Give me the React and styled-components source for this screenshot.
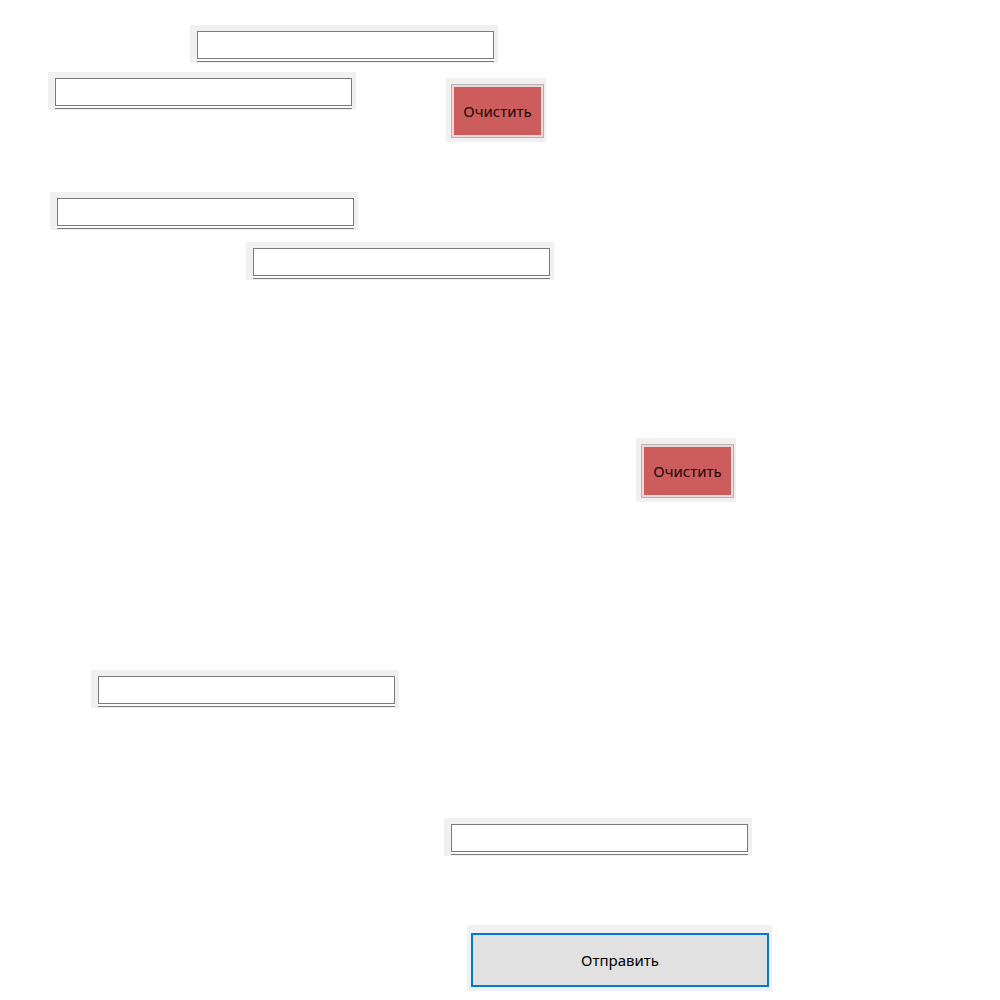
import React from 'react';
import styled, { createGlobalStyle } from 'styled-components';

const GlobalStyle = createGlobalStyle`
  html, body {
    margin: 0;
    padding: 0;
    background: #ffffff;
  }
  body {
    font-family: "Noto Sans", "Open Sans", sans-serif;
  }
`;

const Canvas = styled.div`
  position: relative;
  width: 1000px;
  height: 1000px;
  overflow: hidden;
  background: #ffffff;
`;

// every widget sits on a light grey frame, placed freely on the canvas
const Frame = styled.div`
  position: absolute;
  box-sizing: border-box;
  background: #f0f0f0;
  display: flex;
  align-items: flex-start;
`;

const FieldFrame = styled(Frame)`
  width: 308px;
  height: 38px;
  padding: 6px 0 0 7px;
`;

const TextBox = styled.input`
  box-sizing: border-box;
  width: 297px;
  height: 28px;
  margin: 0;
  padding: 0 4px;
  border: 1px solid #7a7a7a;
  border-radius: 0;
  background: #ffffff;
  outline: none;
  font: inherit;
  font-size: 14px;
  box-shadow: 0 2px 0 0 #fbfbfb, 0 3px 0 0 #7a7a7a;
`;

const ClearFrame = styled(Frame)`
  width: 100px;
  height: 64px;
  padding: 6px 0 0 5px;
`;

const ClearButton = styled.button`
  box-sizing: border-box;
  width: 93px;
  height: 54px;
  margin: 0;
  padding: 0;
  border: 1px solid #b9b0b0;
  border-radius: 0;
  background: #cd5c5c;
  box-shadow: inset 0 0 0 2px #e9d9d9;
  color: #1a0505;
  font-family: "Noto Sans", "Open Sans", sans-serif;
  font-size: 15px;
  cursor: pointer;
`;

const SubmitFrame = styled(Frame)`
  width: 305px;
  height: 66px;
  padding: 8px 0 0 4px;
`;

const SubmitButton = styled.button`
  box-sizing: border-box;
  width: 298px;
  height: 54px;
  margin: 0;
  padding: 0;
  border: 2px solid #0078d7;
  border-radius: 0;
  background: #e1e1e1;
  color: #000000;
  font-family: "Noto Sans", "Open Sans", sans-serif;
  font-size: 15px;
  cursor: pointer;
`;

const fields = [
  { x: 190, y: 25 },
  { x: 48, y: 72 },
  { x: 50, y: 192 },
  { x: 246, y: 242 },
  { x: 91, y: 670 },
  { x: 444, y: 818 },
];

const clears = [
  { x: 446, y: 78 },
  { x: 636, y: 438 },
];

export default function App() {
  return (
    <>
      <GlobalStyle />
      <Canvas>
        {fields.map((f, i) => (
          <FieldFrame key={'f' + i} style={{ left: f.x, top: f.y }}>
            <TextBox type="text" />
          </FieldFrame>
        ))}
        {clears.map((c, i) => (
          <ClearFrame key={'c' + i} style={{ left: c.x, top: c.y }}>
            <ClearButton type="button">Очистить</ClearButton>
          </ClearFrame>
        ))}
        <SubmitFrame style={{ left: 467, top: 925 }}>
          <SubmitButton type="button">Отправить</SubmitButton>
        </SubmitFrame>
      </Canvas>
    </>
  );
}
